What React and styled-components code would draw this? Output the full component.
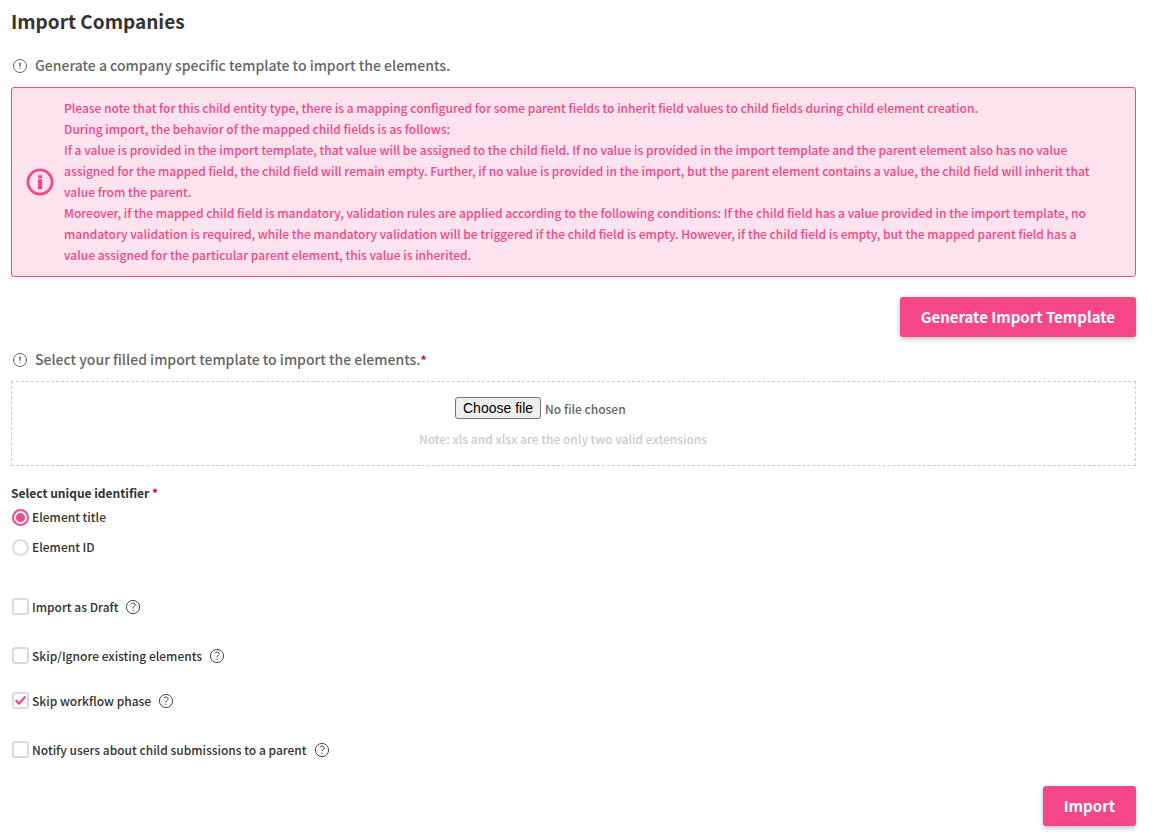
import React, { useState } from 'react'
import styled, { createGlobalStyle } from 'styled-components'

const options = [
  { id: 'draft', label: 'Import as Draft', gap: 28 },
  { id: 'skipExisting', label: 'Skip/Ignore existing elements', gap: 24 },
  { id: 'skipWorkflow', label: 'Skip workflow phase', gap: 28 },
  { id: 'notify', label: 'Notify users about child submissions to a parent', gap: 26 },
]

function HintIcon() {
  return (
    <Icon width="16" height="16" viewBox="0 0 16 16" aria-hidden="true">
      <circle cx="8" cy="8" r="6.5" fill="none" stroke="currentColor" strokeWidth="1" />
      <path d="M7 4.8h2L8.4 9H7.6z" fill="currentColor" />
      <circle cx="8" cy="10.4" r="0.6" fill="currentColor" />
    </Icon>
  )
}

function InfoIcon() {
  return (
    <Icon width="28" height="28" viewBox="0 0 28 28" aria-hidden="true">
      <circle cx="14" cy="14" r="12.1" fill="none" stroke="currentColor" strokeWidth="2.8" />
      <path d="M12 7.2h4.2v3H12zM12 11.2h4.2v10H12z" fill="currentColor" />
    </Icon>
  )
}

function HelpIcon() {
  return (
    <Icon width="16" height="16" viewBox="0 0 16 16" aria-hidden="true">
      <circle cx="8" cy="8" r="6.6" fill="none" stroke="currentColor" strokeWidth="0.9" />
      <path
        d="M6 5.2C6.3 4.4 7.1 4 8 4c1.2 0 2.1.7 2.1 1.9C10.1 7.3 8 7.6 8 9.4"
        fill="none"
        stroke="currentColor"
        strokeWidth="0.9"
      />
      <circle cx="8" cy="11.2" r="0.6" fill="currentColor" />
    </Icon>
  )
}

function App() {
  const [identifier, setIdentifier] = useState('title')
  const [checked, setChecked] = useState({ skipWorkflow: true })
  const [fileName, setFileName] = useState('')

  const toggle = (id) => setChecked({ ...checked, [id]: !checked[id] })

  return (
    <Page>
      <GlobalStyle />
      <Title>Import Companies</Title>

      <Hint>
        <HintIcon />
        Generate a company specific template to import the elements.
      </Hint>

      <Alert>
        <InfoIcon />
        <AlertText>
          Please note that for this child entity type, there is a mapping configured for some parent
          fields to inherit field values to child fields during child element creation.
          <br />
          During import, the behavior of the mapped child fields is as follows:
          <br />
          If a value is provided in the import template, that value will be assigned to the child
          field. If no value is provided in the import template and the parent element also has no
          value assigned for the mapped field, the child field will remain empty. Further, if no
          value is provided in the import, but the parent element contains a value, the child field
          will inherit that value from the parent.
          <br />
          Moreover, if the mapped child field is mandatory, validation rules are applied according to
          the following conditions: If the child field has a value provided in the import template,
          no mandatory validation is required, while the mandatory validation will be triggered if
          the child field is empty. However, if the child field is empty, but the mapped parent field
          has a value assigned for the particular parent element, this value is inherited.
        </AlertText>
      </Alert>

      <Actions>
        <Button type="button">Generate Import Template</Button>
      </Actions>

      <Hint>
        <HintIcon />
        <span>
          Select your filled import template to import the elements.
          <Required>*</Required>
        </span>
      </Hint>

      <DropArea>
        <FileRow>
          <FileInput
            id="file"
            type="file"
            accept=".xls,.xlsx"
            onChange={(e) => setFileName(e.target.files[0] ? e.target.files[0].name : '')}
          />
          <FileButton htmlFor="file">Choose file</FileButton>
          <span>{fileName || 'No file chosen'}</span>
        </FileRow>
        <Note>Note: xls and xlsx are the only two valid extensions</Note>
      </DropArea>

      <Identifier>
        <Legend>
          Select unique identifier <Required>*</Required>
        </Legend>
        <RadioLabel>
          <Radio
            name="identifier"
            checked={identifier === 'title'}
            onChange={() => setIdentifier('title')}
          />
          Element title
        </RadioLabel>
        <RadioLabel>
          <Radio
            name="identifier"
            checked={identifier === 'id'}
            onChange={() => setIdentifier('id')}
          />
          Element ID
        </RadioLabel>
      </Identifier>

      {options.map(({ id, label, gap }) => (
        <OptionRow key={id} $gap={gap}>
          <OptionLabel>
            <Checkbox checked={!!checked[id]} onChange={() => toggle(id)} />
            {label}
          </OptionLabel>
          <HelpIcon />
        </OptionRow>
      ))}

      <Actions>
        <Button type="submit">Import</Button>
      </Actions>
    </Page>
  )
}

export default App

const GlobalStyle = createGlobalStyle`
* {
  box-sizing: border-box;
}

body {
  margin: 0;
  background: #fff;
  color: #333;
  font-family: "Noto Sans CJK SC", "Noto Sans", sans-serif;
  font-size: 12px;
  font-weight: 500;
  line-height: 21px;
}
`

const Page = styled.main`
  padding: 7px 16px 12px 11px;
`

const Icon = styled.svg`
  display: block;
  flex: none;
`

const Title = styled.h1`
  margin: 0 0 20px;
  font-size: 19px;
  line-height: 28px;
  font-weight: 700;
`

const Hint = styled.div`
  display: flex;
  align-items: center;
  gap: 7px;
  padding-left: 1px;
  margin-bottom: 11px;
  color: #666;
  font-size: 14px;
`

const Required = styled.span`
  color: #d0021b;
  font-size: 12px;
  font-weight: 700;
`

const Alert = styled.div`
  display: flex;
  align-items: center;
  gap: 10px;
  padding: 9px 40px 9px 14px;
  margin-bottom: 20px;
  border: 1px solid #f54788;
  border-radius: 3px;
  background: #fde3ed;
  color: #f54788;
`

const AlertText = styled.p`
  margin: 0;
  padding-bottom: 2px;
  flex: 1;
`

const Actions = styled.div`
  display: flex;
  justify-content: flex-end;
  margin-bottom: 12px;
`

const Button = styled.button`
  height: 40px;
  padding: 0 21px 2px;
  border: none;
  border-radius: 3px;
  background: #f54788;
  color: #fff;
  font-family: inherit;
  font-size: 15px;
  font-weight: 700;
  cursor: pointer;
  box-shadow: 0 2px 5px rgba(0, 0, 0, 0.25);
`

const DropArea = styled.div`
  display: flex;
  flex-direction: column;
  align-items: center;
  gap: 9px;
  padding: 15px 21px 16px 0;
  margin-bottom: 16px;
  border: 1px dashed #ccc;
`

const FileRow = styled.div`
  display: flex;
  align-items: center;
  gap: 4px;
  width: 216px;
  color: #666;
`

const FileInput = styled.input`
  position: absolute;
  width: 1px;
  height: 1px;
  opacity: 0;
`

const FileButton = styled.label`
  padding: 0 7px;
  border: 1px solid #767676;
  border-radius: 3px;
  background: #efefef;
  color: #000;
  font-family: "Liberation Sans", Arial, sans-serif;
  font-size: 14px;
  font-weight: 400;
  line-height: 20px;
  white-space: nowrap;
`

const Note = styled.div`
  color: #ccc;
`

const Identifier = styled.fieldset`
  margin: 0 0 39px;
  padding: 0;
  border: none;
`

const Legend = styled.legend`
  padding: 0;
  margin-bottom: 3px;
  font-weight: 700;
`

const RadioLabel = styled.label`
  display: flex;
  align-items: center;
  gap: 3px;
  padding-left: 1px;

  & + & {
    margin-top: 9px;
  }
`

const Radio = styled.input.attrs({ type: 'radio' })`
  appearance: none;
  flex: none;
  width: 17px;
  height: 17px;
  margin: 2px 0 0;
  border: 2px solid #d6dce2;
  border-radius: 50%;

  &:checked {
    border-color: #f54788;
    background: radial-gradient(circle, #f54788 4px, #fff 5px);
  }
`

const OptionRow = styled.div`
  display: flex;
  align-items: center;
  gap: 7px;
  padding-left: 1px;
  margin-bottom: ${({ $gap }) => $gap}px;
`

const OptionLabel = styled.label`
  display: flex;
  align-items: center;
  gap: 3px;
`

const checkMark = (
  "url(\"data:image/svg+xml,%3Csvg xmlns='http://www.w3.org/2000/svg' viewBox='0 0 13 13'%3E" +
  "%3Cpath d='M1.6 6.2l3.4 3.4 6.4-7' fill='none' stroke='%23f54788' stroke-width='2.2'/%3E%3C/svg%3E\")"
)

const Checkbox = styled.input.attrs({ type: 'checkbox' })`
  appearance: none;
  flex: none;
  width: 17px;
  height: 17px;
  margin: 0;
  border: 2px solid #d6dce2;
  border-radius: 3px;

  &:checked {
    background: ${checkMark} center / 13px no-repeat;
  }
`
